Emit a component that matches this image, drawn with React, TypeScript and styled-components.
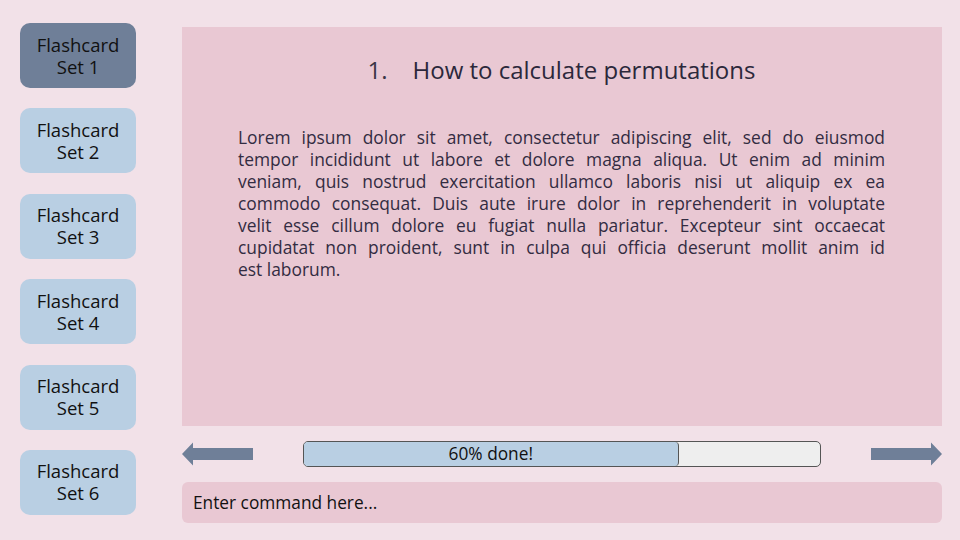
import styled, { createGlobalStyle } from 'styled-components'

const GlobalStyle = createGlobalStyle`
  html, body {
    margin: 0;
    padding: 0;
    background: #f2e1e8;
  }
  body {
    font-family: 'Open Sans', 'Noto Sans', sans-serif;
  }
`

const sets = [1, 2, 3, 4, 5, 6]

// lines as broken in the design
const loremLines = [
  'Lorem ipsum dolor sit amet, consectetur adipiscing elit, sed do eiusmod',
  'tempor incididunt ut labore et dolore magna aliqua. Ut enim ad minim',
  'veniam, quis nostrud exercitation ullamco laboris nisi ut aliquip ex ea',
  'commodo consequat. Duis aute irure dolor in reprehenderit in voluptate',
  'velit esse cillum dolore eu fugiat nulla pariatur. Excepteur sint occaecat',
  'cupidatat non proident, sunt in culpa qui officia deserunt mollit anim id',
  'est laborum.',
]

const Arrow = ({ dir }: { dir: 'left' | 'right' }) => (
  <ArrowSvg width="72" height="24" viewBox="0 0 72 24" flip={dir === 'right'}>
    <path d="M0 12 L11 0.5 L11 6 L71 6 L71 18 L11 18 L11 23.5 Z" fill="#6f7f98" />
  </ArrowSvg>
)

export default function App() {
  const progress = 72.6

  return (
    <>
      <GlobalStyle />
      <Page>
        <Sidebar>
          {sets.map((n) => (
            <SetButton key={n} active={n === 1}>
              Flashcard
              <br />
              Set {n}
            </SetButton>
          ))}
        </Sidebar>

        <Main>
          <CardPanel>
            <TitleList>
              <li>How to calculate permutations</li>
            </TitleList>
            <Body>
              {loremLines.map((line, i) => (
                <BodyLine key={i} last={i === loremLines.length - 1}>
                  {line}
                </BodyLine>
              ))}
            </Body>
          </CardPanel>

          <ProgressRow>
            <Arrow dir="left" />
            <ProgressTrack>
              <ProgressFill style={{ width: `${progress}%` }}>60% done!</ProgressFill>
            </ProgressTrack>
            <Arrow dir="right" />
          </ProgressRow>

          <CommandInput placeholder="Enter command here..." />
        </Main>
      </Page>
    </>
  )
}

const Page = styled.div`
  width: 960px;
  height: 540px;
  box-sizing: border-box;
  padding: 23px 18px 17px 20px;
  display: flex;
  gap: 46px;
`

const Sidebar = styled.div`
  width: 116px;
  height: 492px;
  display: flex;
  flex-direction: column;
  justify-content: space-between;
`

const SetButton = styled.div<{ active?: boolean }>`
  height: 65px;
  border-radius: 10px;
  background: ${({ active }) => (active ? '#6f7f98' : '#b9cfe3')};
  color: #111;
  font-size: 18.5px;
  line-height: 22px;
  text-align: center;
  display: flex;
  align-items: center;
  justify-content: center;
`

const Main = styled.div`
  flex: 1;
  display: flex;
  flex-direction: column;
  padding-top: 4px;
`

const CardPanel = styled.div`
  height: 399px;
  background: #e9c8d3;
  box-sizing: border-box;
  padding: 26px 57px 0 56px;
`

const TitleList = styled.ol`
  margin: 0;
  padding: 0;
  list-style-position: inside;
  text-align: center;
  font-size: 24px;
  line-height: 34px;
  color: #2c283b;
  li::marker {
    content: '1.    ';
    white-space: pre;
    color: #3a3646;
  }
`

const Body = styled.div`
  margin: 39px 0 0 0;
  font-size: 17.4px;
  line-height: 22px;
  color: #332c42;
`

const BodyLine = styled.span<{ last?: boolean }>`
  display: block;
  text-align: ${({ last }) => (last ? 'left' : 'justify')};
  text-align-last: ${({ last }) => (last ? 'left' : 'justify')};
`

const ProgressRow = styled.div`
  margin-top: 15px;
  height: 26px;
  display: flex;
  align-items: center;
  justify-content: space-between;
`

const ArrowSvg = styled.svg<{ flip?: boolean }>`
  display: block;
  transform: ${({ flip }) => (flip ? 'scaleX(-1)' : 'none')};
`

const ProgressTrack = styled.div`
  width: 518px;
  height: 26px;
  box-sizing: border-box;
  border: 1px solid #555;
  border-radius: 5px;
  background: #eeeeee;
  overflow: hidden;
  display: flex;
`

const ProgressFill = styled.div`
  height: 100%;
  background: #b9cfe3;
  border-right: 1px solid #555;
  border-radius: 0 4px 4px 0;
  box-sizing: border-box;
  font-size: 17.3px;
  line-height: 24px;
  text-align: center;
  color: #111;
`

const CommandInput = styled.input`
  margin-top: 15px;
  height: 41px;
  box-sizing: border-box;
  border: none;
  outline: none;
  border-radius: 6px;
  background: #e9c8d3;
  padding: 0 11px;
  font-family: 'Open Sans', 'Noto Sans', sans-serif;
  font-size: 17.3px;
  color: #111;
  &::placeholder {
    color: #111;
  }
`
